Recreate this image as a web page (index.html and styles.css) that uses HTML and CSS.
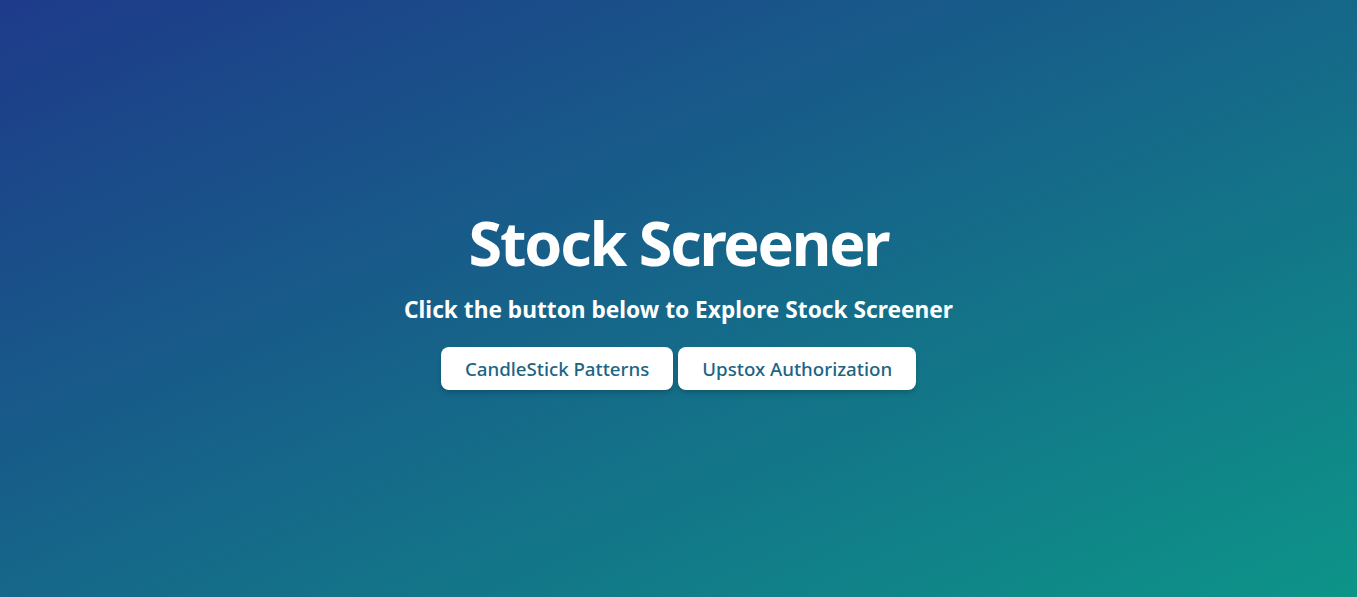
FILE: index.html
```html
<!DOCTYPE html>
<html lang="en">
<head>
<meta charset="utf-8">
<title>Stock Screener</title>
<link rel="stylesheet" href="styles.css">
</head>
<body>
<main class="hero">
  <h1 class="title">Stock Screener</h1>
  <p class="subtitle">Click the button below to Explore Stock Screener</p>
  <div class="actions">
    <button class="btn">CandleStick Patterns</button>
    <button class="btn">Upstox Authorization</button>
  </div>
</main>
</body>
</html>
```

FILE: styles.css
```css
html, body {
  margin: 0;
  padding: 0;
  height: 100%;
}
body {
  font-family: "Noto Sans", "Open Sans", sans-serif;
  background: linear-gradient(to bottom right, #1e3a8a, #0d9488);
  color: #fff;
}
.hero {
  min-height: 100vh;
  display: flex;
  flex-direction: column;
  align-items: center;
  justify-content: center;
  text-align: center;
  box-sizing: border-box;
  padding-top: 5px;
}
.title {
  margin: 0;
  font-size: 61px;
  font-weight: 700;
  line-height: 1;
  letter-spacing: -2.2px;
}
.subtitle {
  margin: 23px 0 0;
  font-size: 22.7px;
  font-weight: 700;
  line-height: 28px;
}
.actions {
  margin-top: 23px;
  display: flex;
  gap: 5px;
}
.btn {
  font-family: inherit;
  font-size: 18.7px;
  font-weight: 500;
  color: #1b6585;
  background: #fff;
  border: none;
  border-radius: 8px;
  height: 43px;
  padding: 0 24px;
  box-shadow: 0 4px 6px -1px rgba(0,0,0,0.15), 0 2px 4px -2px rgba(0,0,0,0.15);
  cursor: pointer;
}
```
